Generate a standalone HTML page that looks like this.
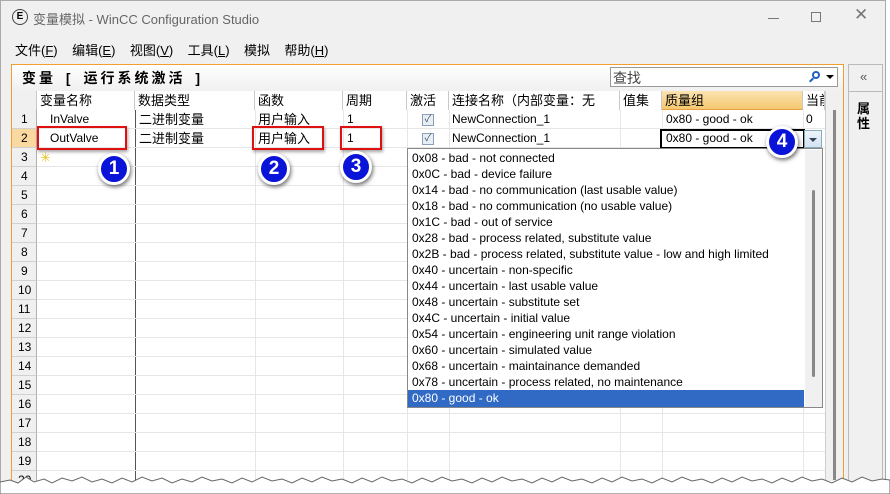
<!DOCTYPE html>
<html><head><meta charset="utf-8"><style>
*{margin:0;padding:0;box-sizing:border-box}
body{width:890px;height:494px;overflow:hidden;background:#fff;font-family:"Liberation Sans","Noto Sans CJK SC",sans-serif;font-size:12px;color:#000;position:relative}
.a{position:absolute}
.win{left:0;top:0;width:886px;height:494px;background:#f0f0f0;border:1px solid #aaa}
.t{white-space:nowrap}
.vl{position:absolute;width:1px;background:#e6e6e6}
.hl{position:absolute;height:1px;background:#e6e6e6}
.rn{position:absolute;left:12px;width:25px;height:19px;background:#f0f0f0;border-bottom:1px solid #d0d0d0;border-right:1px solid #b0b0b0;padding-left:9px;line-height:19px;font-size:12px}
.li{position:absolute;left:412px;height:16px;line-height:16px;white-space:nowrap;font-size:12px}
.badge{position:absolute;width:32px;height:32px;border-radius:50%;background:#0a14d8;border:3px solid #fff;box-shadow:1px 2px 4px rgba(0,0,0,.6);color:#fff;font-weight:bold;font-size:19px;text-align:center;line-height:26px}
.red{position:absolute;border:2px solid #e01010;box-shadow:1px 2px 3px rgba(0,0,0,.35)}
.hd{position:absolute;top:91px;height:19px;line-height:19px;font-size:13px;padding-left:3px;border-right:1px solid #c8c8c8;background:#fff;white-space:nowrap;overflow:hidden}
.c{position:absolute;line-height:19px;white-space:nowrap;font-size:12px}
.cb{position:absolute;width:12px;height:12px;border:1px solid #8ea0b8;background:#e8eef6;font-size:10px;line-height:10px;text-align:center;color:#456}
</style></head><body>
<div class="a win"></div>
<div class="a" style="left:12px;top:9px;width:16px;height:16px;border:1.5px solid #444;border-radius:50%;font-size:10px;line-height:13px;text-align:center;font-weight:bold">E</div>
<div class="a t" style="left:33px;top:9px;color:#666;font-size:13px">变量模拟 - WinCC Configuration Studio</div>
<div class="a" style="left:768px;top:18px;width:11px;height:1px;background:#777"></div>
<div class="a" style="left:811px;top:12px;width:10px;height:10px;border:1px solid #777"></div>
<div class="a t" style="left:854px;top:5px;color:#777;font-size:17px">✕</div>
<div class="a t" style="left:15px;top:40px;font-size:13px;word-spacing:0">文件(<u>F</u>)&nbsp;&nbsp;&nbsp;&nbsp;编辑(<u>E</u>)&nbsp;&nbsp;&nbsp;&nbsp;视图(<u>V</u>)&nbsp;&nbsp;&nbsp;&nbsp;工具(<u>L</u>)&nbsp;&nbsp;&nbsp;&nbsp;模拟&nbsp;&nbsp;&nbsp;&nbsp;帮助(<u>H</u>)</div>
<div class="a" style="left:11px;top:64px;width:833px;height:430px;border:1px solid #f0a030;border-bottom:none;background:#fff"></div>
<div class="a" style="left:12px;top:65px;width:831px;height:26px;background:linear-gradient(#fff,#f0f0f0)"></div>
<div class="a t" style="left:22px;top:68px;font-size:14px;font-weight:bold;letter-spacing:3px;word-spacing:3px">变量 [ 运行系统激活 ]</div>
<div class="a" style="left:610px;top:67px;width:228px;height:20px;border:1px solid #999;background:#fff"></div>
<div class="a t" style="left:613px;top:68px;font-size:14px;color:#444">查找</div>
<div class="a" style="left:812px;top:71px;width:8px;height:8px;border:2px solid #2060c0;border-radius:50%"></div>
<div class="a" style="left:809px;top:79px;width:5px;height:2px;background:#2060c0;transform:rotate(-45deg)"></div>
<div class="a" style="left:826px;top:75px;border-left:4px solid transparent;border-right:4px solid transparent;border-top:4px solid #000"></div>
<div class="a" style="left:12px;top:91px;width:813px;height:19px;background:#fff;border-bottom:1px solid #c8c8c8"></div>
<div class="hd" style="left:12px;width:25px;background:#f0f0f0"></div>
<div class="hd" style="left:37px;width:98px">变量名称</div>
<div class="hd" style="left:135px;width:120px">数据类型</div>
<div class="hd" style="left:255px;width:88px">函数</div>
<div class="hd" style="left:343px;width:64px">周期</div>
<div class="hd" style="left:407px;width:42px">激活</div>
<div class="hd" style="left:449px;width:171px">连接名称（内部变量：无</div>
<div class="hd" style="left:620px;width:42px">值集</div>
<div class="hd" style="left:662px;width:141px;background:linear-gradient(#fbe3b0,#f5c870);border-bottom:1px solid #e8a040">质量组</div>
<div class="hd" style="left:803px;width:22px">当前</div>
<div class="vl" style="left:135px;top:110px;height:370px;background:#555"></div>
<div class="vl" style="left:255px;top:110px;height:370px"></div>
<div class="vl" style="left:343px;top:110px;height:370px"></div>
<div class="vl" style="left:407px;top:110px;height:370px"></div>
<div class="vl" style="left:449px;top:110px;height:40px"></div>
<div class="vl" style="left:620px;top:110px;height:40px"></div>
<div class="vl" style="left:662px;top:110px;height:40px"></div>
<div class="vl" style="left:803px;top:110px;height:370px"></div>
<div class="vl" style="left:620px;top:407px;height:73px"></div>
<div class="vl" style="left:662px;top:407px;height:73px"></div>
<div class="vl" style="left:449px;top:407px;height:73px"></div>
<div class="hl" style="left:37px;top:128px;width:788px"></div><div class="hl" style="left:37px;top:147px;width:788px"></div><div class="hl" style="left:37px;top:166px;width:370px"></div><div class="hl" style="left:37px;top:185px;width:370px"></div><div class="hl" style="left:37px;top:204px;width:370px"></div><div class="hl" style="left:37px;top:223px;width:370px"></div><div class="hl" style="left:37px;top:242px;width:370px"></div><div class="hl" style="left:37px;top:261px;width:370px"></div><div class="hl" style="left:37px;top:280px;width:370px"></div><div class="hl" style="left:37px;top:299px;width:370px"></div><div class="hl" style="left:37px;top:318px;width:370px"></div><div class="hl" style="left:37px;top:337px;width:370px"></div><div class="hl" style="left:37px;top:356px;width:370px"></div><div class="hl" style="left:37px;top:375px;width:370px"></div><div class="hl" style="left:37px;top:394px;width:370px"></div><div class="hl" style="left:37px;top:413px;width:788px"></div><div class="hl" style="left:37px;top:432px;width:788px"></div><div class="hl" style="left:37px;top:451px;width:788px"></div><div class="hl" style="left:37px;top:470px;width:788px"></div>
<div class="rn" style="top:110px">1</div>
<div class="rn" style="top:129px;background:#fad9a0">2</div>
<div class="rn" style="top:148px">3</div><div class="rn" style="top:167px">4</div><div class="rn" style="top:186px">5</div><div class="rn" style="top:205px">6</div><div class="rn" style="top:224px">7</div><div class="rn" style="top:243px">8</div><div class="rn" style="top:262px">9</div><div class="rn" style="top:281px;padding-left:6px">10</div><div class="rn" style="top:300px;padding-left:6px">11</div><div class="rn" style="top:319px;padding-left:6px">12</div><div class="rn" style="top:338px;padding-left:6px">13</div><div class="rn" style="top:357px;padding-left:6px">14</div><div class="rn" style="top:376px;padding-left:6px">15</div><div class="rn" style="top:395px;padding-left:6px">16</div><div class="rn" style="top:414px;padding-left:6px">17</div><div class="rn" style="top:433px;padding-left:6px">18</div><div class="rn" style="top:452px;padding-left:6px">19</div><div class="rn" style="top:471px;padding-left:6px">20</div>
<div class="c" style="left:50px;top:110px">InValve</div>
<div class="c" style="left:50px;top:129px">OutValve</div>
<div class="c" style="left:139px;top:110px;font-size:13px">二进制变量</div>
<div class="c" style="left:139px;top:129px;font-size:13px">二进制变量</div>
<div class="c" style="left:258px;top:110px;font-size:13px">用户输入</div>
<div class="c" style="left:258px;top:129px;font-size:13px">用户输入</div>
<div class="c" style="left:347px;top:110px">1</div>
<div class="c" style="left:347px;top:129px">1</div>
<div class="cb" style="left:422px;top:114px">✓</div>
<div class="cb" style="left:422px;top:133px">✓</div>
<div class="c" style="left:452px;top:110px">NewConnection_1</div>
<div class="c" style="left:452px;top:129px">NewConnection_1</div>
<div class="c" style="left:666px;top:110px">0x80 - good - ok</div>
<div class="c" style="left:806px;top:110px">0</div>
<div class="a" style="left:660px;top:129px;width:145px;height:20px;border:2px solid #000;background:#fff"></div>
<div class="c" style="left:666px;top:129px">0x80 - good - ok</div>
<div class="a" style="left:804px;top:130px;width:18px;height:18px;border:1px solid #8ab;background:linear-gradient(#eef4fb,#d4e2f2)"></div>
<div class="a" style="left:809px;top:138px;border-left:4px solid transparent;border-right:4px solid transparent;border-top:4px solid #345"></div>
<div class="a" style="left:40px;top:150px;color:#e8c020;font-size:13px">✳</div>
<div class="a" style="left:407px;top:148px;width:416px;height:260px;background:#fff;border:1px solid #888"></div>
<div class="a" style="left:805px;top:150px;width:17px;height:257px;background:#f0f0f0"></div>
<div class="a" style="left:812px;top:190px;width:3px;height:187px;background:#888;border-radius:2px"></div>
<div class="li" style="top:150px">0x08 - bad - not connected</div>
<div class="li" style="top:166px">0x0C - bad - device failure</div>
<div class="li" style="top:182px">0x14 - bad - no communication (last usable value)</div>
<div class="li" style="top:198px">0x18 - bad - no communication (no usable value)</div>
<div class="li" style="top:214px">0x1C - bad - out of service</div>
<div class="li" style="top:230px">0x28 - bad - process related, substitute value</div>
<div class="li" style="top:246px">0x2B - bad - process related, substitute value - low and high limited</div>
<div class="li" style="top:262px">0x40 - uncertain - non-specific</div>
<div class="li" style="top:278px">0x44 - uncertain - last usable value</div>
<div class="li" style="top:294px">0x48 - uncertain - substitute set</div>
<div class="li" style="top:310px">0x4C - uncertain - initial value</div>
<div class="li" style="top:326px">0x54 - uncertain - engineering unit range violation</div>
<div class="li" style="top:342px">0x60 - uncertain - simulated value</div>
<div class="li" style="top:358px">0x68 - uncertain - maintainance demanded</div>
<div class="li" style="top:374px">0x78 - uncertain - process related, no maintenance</div>
<div class="a" style="left:408px;top:390px;width:396px;height:17px;background:#316ac5"></div>
<div class="li" style="top:390px;color:#fff">0x80 - good - ok</div>
<div class="a" style="left:825px;top:91px;width:18px;height:390px;background:#f0f0f0;border-left:1px solid #ccc"></div>
<div class="a" style="left:833px;top:110px;width:3px;height:370px;background:#888"></div>
<div class="a" style="left:848px;top:64px;width:35px;height:420px;background:#f0f0f0;border:1px solid #bbb"></div>
<div class="a" style="left:848px;top:91px;width:35px;height:1px;background:#bbb"></div>
<div class="a t" style="left:860px;top:69px;color:#555;font-size:13px">«</div>
<div class="a" style="left:857px;top:101px;width:16px;font-size:13px;font-weight:bold;line-height:15px">属性</div>
<div class="red" style="left:37px;top:126px;width:90px;height:24px"></div>
<div class="red" style="left:252px;top:126px;width:72px;height:24px"></div>
<div class="red" style="left:340px;top:126px;width:42px;height:24px"></div>
<div class="badge" style="left:98px;top:153px">1</div>
<div class="badge" style="left:258px;top:153px">2</div>
<div class="badge" style="left:340px;top:151px">3</div>
<div class="badge" style="left:766px;top:126px">4</div>
<svg class="a" style="left:0;top:474px" width="890" height="20"><path d="M0,8 L10,6 L18,9 L26,3 L34,8 L44,5 L52,9 L62,4 L72,7 L82,3 L92,8 L102,5 L112,9 L122,4 L132,8 L142,3 L152,7 L162,4 L172,9 L182,5 L192,8 L202,3 L212,7 L222,5 L232,9 L242,4 L252,8 L262,3 L272,7 L282,5 L292,9 L302,4 L312,8 L322,3 L332,7 L342,5 L352,9 L362,4 L372,8 L382,3 L392,7 L402,5 L412,9 L422,4 L432,8 L442,3 L452,7 L462,5 L472,9 L482,4 L492,8 L502,3 L512,7 L522,5 L532,9 L542,4 L552,8 L562,3 L572,7 L582,5 L592,9 L602,4 L612,8 L622,3 L632,7 L642,5 L652,9 L662,4 L672,8 L682,3 L692,7 L702,5 L712,9 L722,4 L732,8 L742,3 L752,7 L762,5 L772,9 L782,4 L792,8 L802,3 L812,7 L822,5 L832,9 L842,4 L852,8 L862,3 L872,7 L882,5 L890,6 L890,20 L0,20 Z" fill="#fff" stroke="#666" stroke-width="1"/></svg>
</body></html>
